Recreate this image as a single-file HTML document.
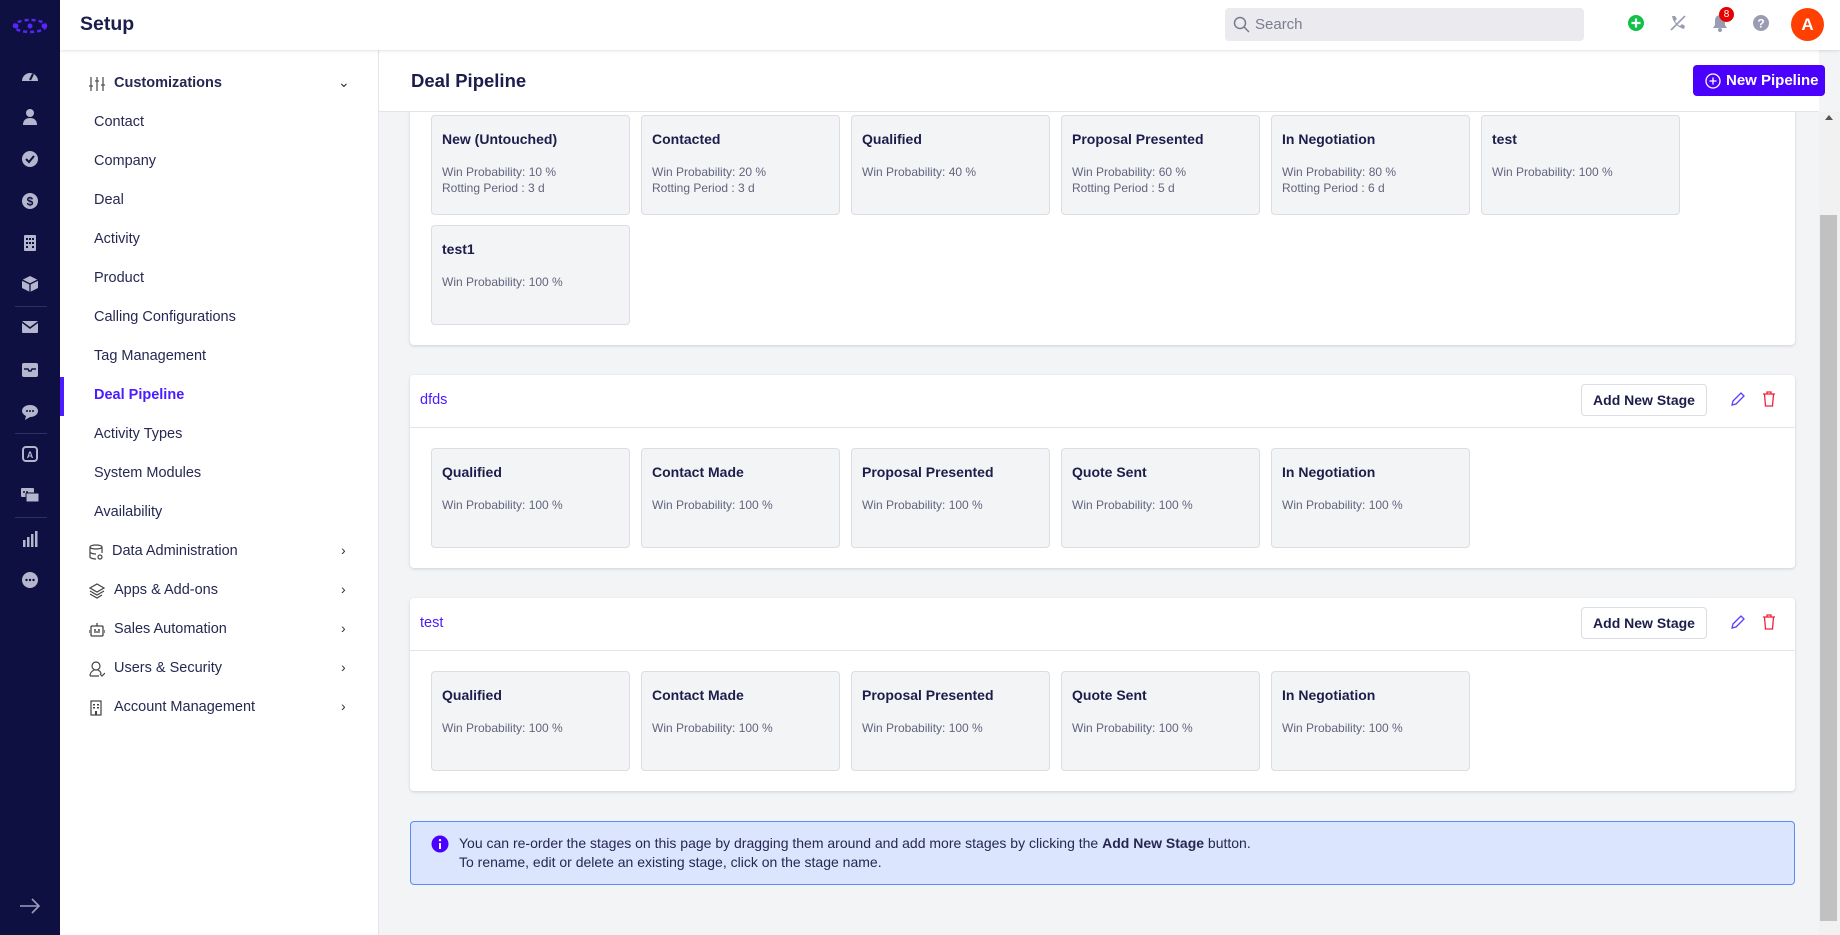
<!DOCTYPE html>
<html><head><meta charset="utf-8"><style>
*{box-sizing:border-box;margin:0;padding:0}
body{width:1840px;height:935px;overflow:hidden;background:#f3f4f6;font-family:"Liberation Sans",sans-serif;color:#1c1d4a;position:relative}
.abs{position:absolute}
#rail{left:0;top:0;width:60px;height:935px;background:#0e1042}
.ri{position:absolute;left:20px;width:20px;height:20px}
.sep{position:absolute;left:15px;width:32px;height:1px;background:#2d3065}
#top{left:60px;top:0;width:1780px;height:50px;background:#fff;box-shadow:0 1px 3px rgba(0,0,0,.12);z-index:5}
#side{left:60px;top:50px;width:319px;height:885px;background:#fff;border-right:1px solid #e3e4ea}
.si{position:absolute;left:94px;height:39px;line-height:39px;font-size:14.5px;color:#262852}
.sg{position:absolute;left:89px;height:39px;line-height:39px;font-size:14.5px;color:#262852}
.sg svg{position:absolute;left:0;top:12px}
.sg span{position:absolute;left:25px;white-space:nowrap}
.chev{position:absolute;left:341px;font-size:14px;color:#333}
#ph{left:379px;top:50px;width:1440px;height:62px;background:#fff;border-bottom:1px solid #e3e4ea;z-index:4}
.card{position:absolute;left:410px;width:1385px;background:#fff;border-radius:4px;box-shadow:0 1px 3px rgba(0,0,0,.15)}
.st{position:absolute;width:199px;height:100px;background:#f3f4f6;border:1px solid #dcdde3;border-radius:4px}
.st b{position:absolute;left:10px;top:15px;font-size:14px;color:#1c1d4a;white-space:nowrap}
.st p{position:absolute;left:10px;top:48px;font-size:12px;color:#62647e;line-height:16px;white-space:nowrap}
.btn{position:absolute;left:1171px;width:126px;height:32px;border:1px solid #dcdde3;border-radius:4px;background:#fff;font-size:14px;font-weight:bold;color:#1c1d4a;text-align:center;line-height:30px}
.cname{position:absolute;left:10px;top:17px;font-size:14.5px;color:#4b1cff}
</style></head><body>
<div id="rail" class="abs">
<svg class="abs" style="left:12px;top:18px" width="36" height="16" viewBox="0 0 36 16"><g fill="none" stroke="#5a24ff" stroke-width="2.5" stroke-dasharray="4 3"><ellipse cx="18" cy="8" rx="16" ry="6"/></g><circle cx="4" cy="8" r="2.5" fill="#5a24ff"/><circle cx="18" cy="8" r="2.5" fill="#5a24ff"/><circle cx="32" cy="8" r="2.5" fill="#5a24ff"/></svg>
<svg class="ri" style="top:66px" viewBox="0 0 20 20"><path d="M2 15a8 8 0 1 1 16 0z" fill="#b3b6cc"/><path d="M10 14l3-6" stroke="#0e1042" stroke-width="2"/></svg>
<svg class="ri" style="top:107px" viewBox="0 0 20 20"><circle cx="10" cy="6" r="4" fill="#b3b6cc"/><path d="M3 18c0-5 3-7 7-7s7 2 7 7z" fill="#b3b6cc"/></svg>
<svg class="ri" style="top:149px" viewBox="0 0 20 20"><circle cx="10" cy="10" r="8" fill="#b3b6cc"/><path d="M6 10l3 3 5-6" stroke="#0e1042" stroke-width="2" fill="none"/></svg>
<svg class="ri" style="top:191px" viewBox="0 0 20 20"><circle cx="10" cy="10" r="8" fill="#b3b6cc"/><text x="10" y="14.5" font-size="12" text-anchor="middle" fill="#0e1042" font-family="Liberation Sans" font-weight="bold">$</text></svg>
<svg class="ri" style="top:233px" viewBox="0 0 20 20"><rect x="4" y="2" width="12" height="16" rx="1" fill="#b3b6cc"/><g fill="#0e1042"><rect x="6" y="5" width="2" height="2"/><rect x="9" y="5" width="2" height="2"/><rect x="12" y="5" width="2" height="2"/><rect x="6" y="9" width="2" height="2"/><rect x="9" y="9" width="2" height="2"/><rect x="12" y="9" width="2" height="2"/><rect x="6" y="13" width="2" height="2"/><rect x="12" y="13" width="2" height="2"/></g></svg>
<svg class="ri" style="top:274px" viewBox="0 0 20 20"><path d="M10 2l8 4v8l-8 4-8-4V6z" fill="#b3b6cc"/><path d="M2 6l8 4 8-4M10 10v8" stroke="#0e1042" stroke-width="1.3" fill="none"/></svg>
<div class="sep" style="top:306px"></div>
<svg class="ri" style="top:317px" viewBox="0 0 20 20"><rect x="2" y="4" width="16" height="12" rx="1" fill="#b3b6cc"/><path d="M2 5l8 6 8-6" stroke="#0e1042" stroke-width="1.5" fill="none"/></svg>
<svg class="ri" style="top:360px" viewBox="0 0 20 20"><rect x="2" y="3" width="16" height="14" rx="2" fill="#b3b6cc"/><path d="M4 9h4l1 2h2l1-2h4" stroke="#0e1042" stroke-width="1.5" fill="none"/></svg>
<svg class="ri" style="top:402px" viewBox="0 0 20 20"><path d="M10 3c5 0 8 3 8 6s-3 6-8 6l-5 3 1-4c-2-1-4-3-4-5 0-3 3-6 8-6z" fill="#b3b6cc"/><g fill="#0e1042"><circle cx="7" cy="9" r="1"/><circle cx="10" cy="9" r="1"/><circle cx="13" cy="9" r="1"/></g></svg>
<div class="sep" style="top:433px"></div>
<svg class="ri" style="top:444px" viewBox="0 0 20 20"><rect x="3" y="3" width="14" height="14" rx="3" fill="none" stroke="#b3b6cc" stroke-width="2"/><text x="10" y="14" font-size="9" text-anchor="middle" fill="#b3b6cc" font-family="Liberation Sans" font-weight="bold">A</text></svg>
<svg class="ri" style="top:485px" viewBox="0 0 20 20"><rect x="1" y="3" width="13" height="9" rx="1" fill="#b3b6cc"/><rect x="6" y="8" width="13" height="9" rx="1" fill="#b3b6cc" stroke="#0e1042"/><g fill="#0e1042"><circle cx="4" cy="7" r="1"/><circle cx="7" cy="7" r="1"/></g></svg>
<div class="sep" style="top:517px"></div>
<svg class="ri" style="top:529px" viewBox="0 0 20 20"><g fill="#b3b6cc"><rect x="3" y="11" width="2.5" height="7"/><rect x="7" y="8" width="2.5" height="10"/><rect x="11" y="5" width="2.5" height="13"/><rect x="15" y="2" width="2.5" height="16"/></g></svg>
<svg class="ri" style="top:570px" viewBox="0 0 20 20"><circle cx="10" cy="10" r="8" fill="#b3b6cc"/><g fill="#0e1042"><circle cx="6.5" cy="10" r="1.2"/><circle cx="10" cy="10" r="1.2"/><circle cx="13.5" cy="10" r="1.2"/></g></svg>
<svg class="abs" style="left:19px;top:897px" width="22" height="18" viewBox="0 0 22 18"><path d="M1 9h19M13 2l7 7-7 7" stroke="#9a9db8" stroke-width="1.6" fill="none"/></svg>
</div>

<div id="top" class="abs">
<div class="abs" style="left:20px;top:13px;font-size:19.5px;font-weight:bold;color:#1c1d4a">Setup</div>
<div class="abs" style="left:1165px;top:8px;width:359px;height:33px;background:#ebebef;border-radius:4px">
<svg class="abs" style="left:8px;top:8px" width="17" height="17" viewBox="0 0 17 17"><circle cx="7" cy="7" r="5.5" fill="none" stroke="#777a90" stroke-width="1.5"/><path d="M11 11l5 5" stroke="#777a90" stroke-width="1.5"/></svg>
<div class="abs" style="left:30px;top:8px;font-size:15px;color:#7a7c90">Search</div></div>
<svg class="abs" style="left:1567px;top:14px" width="18" height="18" viewBox="0 0 18 18"><circle cx="9" cy="9" r="8" fill="#10c24a"/><path d="M9 4.5v9M4.5 9h9" stroke="#fff" stroke-width="2.2"/></svg>
<svg class="abs" style="left:1609px;top:14px" width="18" height="18" viewBox="0 0 18 18"><path d="M3 2c1 6 5 11 12 13l1-3-3-2-2 2c-2-1-4-3-5-5l2-2-2-3z" fill="#9a9db2"/><path d="M2 16L16 2" stroke="#9a9db2" stroke-width="1.6"/></svg>
<svg class="abs" style="left:1651px;top:14px" width="18" height="18" viewBox="0 0 18 18"><path d="M9 1a5 5 0 0 1 5 5v5l2 3H2l2-3V6a5 5 0 0 1 5-5z" fill="#9a9db2"/><circle cx="9" cy="16" r="2" fill="#9a9db2"/></svg>
<div class="abs" style="left:1659px;top:7px;width:15px;height:15px;border-radius:50%;background:#e60000;color:#fff;font-size:10px;text-align:center;line-height:15px">8</div>
<svg class="abs" style="left:1692px;top:14px" width="18" height="18" viewBox="0 0 18 18"><circle cx="9" cy="9" r="8" fill="#9a9db2"/><text x="9" y="13.5" font-size="12" text-anchor="middle" fill="#fff" font-family="Liberation Sans" font-weight="bold">?</text></svg>
<div class="abs" style="left:1731px;top:8px;width:33px;height:33px;border-radius:50%;background:#ff4000;color:#fff;font-size:17px;font-weight:bold;text-align:center;line-height:33px">A</div>
</div>

<div id="side" class="abs"></div>
<div class="sg" style="top:64px;font-weight:bold"><svg width="16" height="16" viewBox="0 0 16 16"><g stroke="#555" stroke-width="1.3"><path d="M2 1v14M8 1v14M14 1v14M0 10h4M6 5h4M12 9h4"/></g></svg><span style="left:25px">Customizations</span></div>
<div class="chev" style="top:74px;left:338px">&#8964;</div>
<div class="si" style="top:103px">Contact</div>
<div class="si" style="top:142px">Company</div>
<div class="si" style="top:181px">Deal</div>
<div class="si" style="top:220px">Activity</div>
<div class="si" style="top:259px">Product</div>
<div class="si" style="top:298px">Calling Configurations</div>
<div class="si" style="top:337px">Tag Management</div>
<div class="abs" style="left:60px;top:377px;width:4px;height:39px;background:#4b1cff"></div>
<div class="si" style="top:376px;color:#4b1cff;font-weight:bold">Deal Pipeline</div>
<div class="si" style="top:415px">Activity Types</div>
<div class="si" style="top:454px">System Modules</div>
<div class="si" style="top:493px">Availability</div>
<div class="sg" style="top:532px"><svg width="14" height="16" viewBox="0 0 14 16"><g fill="none" stroke="#444" stroke-width="1.2"><ellipse cx="7" cy="3" rx="6" ry="2"/><path d="M1 3v10c0 1 3 2 6 2M13 3v6M1 8c0 1 3 2 6 2"/><circle cx="11" cy="13" r="2"/></g></svg><span style="left:23px">Data Administration</span></div>
<div class="sg" style="top:571px"><svg width="16" height="16" viewBox="0 0 16 16"><g fill="none" stroke="#444" stroke-width="1.2"><path d="M8 1l7 4-7 4-7-4z"/><path d="M1 8l7 4 7-4M1 11l7 4 5-3"/></g></svg></div><div class="si" style="top:571px;left:114px">Apps &amp; Add-ons</div>
<div class="sg" style="top:610px"><svg width="16" height="16" viewBox="0 0 16 16"><g fill="none" stroke="#444" stroke-width="1.3"><rect x="2" y="4" width="12" height="10" rx="1"/><path d="M8 1v3M0 8v3M16 8v3M5 10h6"/></g><circle cx="6" cy="8" r="1" fill="#444"/><circle cx="10" cy="8" r="1" fill="#444"/></svg></div><div class="si" style="top:610px;left:114px">Sales Automation</div>
<div class="sg" style="top:649px"><svg width="16" height="16" viewBox="0 0 16 16"><g fill="none" stroke="#444" stroke-width="1.2"><circle cx="7" cy="5" r="4"/><path d="M1 15c0-3 2-5 4-6M9 9c2 1 3 2 3 4M1 15h9M11 13l2 2 3-3"/></g></svg></div><div class="si" style="top:649px;left:114px">Users &amp; Security</div>
<div class="sg" style="top:688px"><svg width="14" height="16" viewBox="0 0 14 16"><g fill="none" stroke="#444" stroke-width="1.2"><rect x="2" y="1" width="10" height="14"/></g><g fill="#444"><rect x="4" y="4" width="2" height="1.5"/><rect x="8" y="4" width="2" height="1.5"/><rect x="4" y="7" width="2" height="1.5"/><rect x="8" y="7" width="2" height="1.5"/><rect x="6" y="11" width="2" height="4"/></g></svg></div><div class="si" style="top:688px;left:114px">Account Management</div>
<div class="chev" style="top:542px">&#8250;</div>
<div class="chev" style="top:581px">&#8250;</div>
<div class="chev" style="top:620px">&#8250;</div>
<div class="chev" style="top:659px">&#8250;</div>
<div class="chev" style="top:698px">&#8250;</div>

<div id="ph" class="abs">
<div class="abs" style="left:32px;top:20px;font-size:18.5px;font-weight:bold;color:#1c1d4a">Deal Pipeline</div>
<div class="abs" style="left:1314px;top:15px;width:132px;height:31px;background:#4b00ff;border-radius:4px;color:#fff;font-size:15px;font-weight:bold;line-height:31px;padding-left:33px">New Pipeline
<svg class="abs" style="left:12px;top:8px" width="16" height="16" viewBox="0 0 16 16"><circle cx="8" cy="8" r="7" fill="none" stroke="#fff" stroke-width="1.3"/><path d="M8 4.5v7M4.5 8h7" stroke="#fff" stroke-width="1.3"/></svg></div>
</div>
<div class="abs" style="left:1819px;top:112px;width:21px;height:823px;background:#f1f1f1"></div>
<div class="abs" style="left:1820px;top:215px;width:17px;height:706px;background:#c1c1c1"></div>
<div class="abs" style="left:1825px;top:115px;width:0;height:0;border-left:4px solid transparent;border-right:4px solid transparent;border-bottom:5px solid #555"></div>

<div class="card" style="top:60px;height:285px">
<div class="st" style="left:21px;top:55px"><b>New (Untouched)</b><p>Win Probability: 10 %<br>Rotting Period : 3 d</p></div>
<div class="st" style="left:231px;top:55px"><b>Contacted</b><p>Win Probability: 20 %<br>Rotting Period : 3 d</p></div>
<div class="st" style="left:441px;top:55px"><b>Qualified</b><p>Win Probability: 40 %</p></div>
<div class="st" style="left:651px;top:55px"><b>Proposal Presented</b><p>Win Probability: 60 %<br>Rotting Period : 5 d</p></div>
<div class="st" style="left:861px;top:55px"><b>In Negotiation</b><p>Win Probability: 80 %<br>Rotting Period : 6 d</p></div>
<div class="st" style="left:1071px;top:55px"><b>test</b><p>Win Probability: 100 %</p></div>
<div class="st" style="left:21px;top:165px"><b>test1</b><p>Win Probability: 100 %</p></div>
</div>

<div class="card" style="top:375px;height:193px">
<div class="cname">dfds</div>
<div class="btn" style="top:9px">Add New Stage</div>
<svg class="abs" style="left:1320px;top:16px" width="16" height="16" viewBox="0 0 16 16"><path d="M2 14l1-4 8-8 3 3-8 8z" fill="none" stroke="#5a3cff" stroke-width="1.3"/></svg>
<svg class="abs" style="left:1352px;top:16px" width="14" height="16" viewBox="0 0 14 16"><path d="M1 3h12M5 3V1h4v2M2.5 3l1 12h7l1-12" fill="none" stroke="#f0203a" stroke-width="1.3"/></svg>
<div class="abs" style="left:0;top:52px;width:1385px;height:1px;background:#e3e4ea"></div>
<div class="st" style="left:21px;top:73px"><b>Qualified</b><p>Win Probability: 100 %</p></div>
<div class="st" style="left:231px;top:73px"><b>Contact Made</b><p>Win Probability: 100 %</p></div>
<div class="st" style="left:441px;top:73px"><b>Proposal Presented</b><p>Win Probability: 100 %</p></div>
<div class="st" style="left:651px;top:73px"><b>Quote Sent</b><p>Win Probability: 100 %</p></div>
<div class="st" style="left:861px;top:73px"><b>In Negotiation</b><p>Win Probability: 100 %</p></div>
</div>

<div class="card" style="top:598px;height:193px">
<div class="cname">test</div>
<div class="btn" style="top:9px">Add New Stage</div>
<svg class="abs" style="left:1320px;top:16px" width="16" height="16" viewBox="0 0 16 16"><path d="M2 14l1-4 8-8 3 3-8 8z" fill="none" stroke="#5a3cff" stroke-width="1.3"/></svg>
<svg class="abs" style="left:1352px;top:16px" width="14" height="16" viewBox="0 0 14 16"><path d="M1 3h12M5 3V1h4v2M2.5 3l1 12h7l1-12" fill="none" stroke="#f0203a" stroke-width="1.3"/></svg>
<div class="abs" style="left:0;top:52px;width:1385px;height:1px;background:#e3e4ea"></div>
<div class="st" style="left:21px;top:73px"><b>Qualified</b><p>Win Probability: 100 %</p></div>
<div class="st" style="left:231px;top:73px"><b>Contact Made</b><p>Win Probability: 100 %</p></div>
<div class="st" style="left:441px;top:73px"><b>Proposal Presented</b><p>Win Probability: 100 %</p></div>
<div class="st" style="left:651px;top:73px"><b>Quote Sent</b><p>Win Probability: 100 %</p></div>
<div class="st" style="left:861px;top:73px"><b>In Negotiation</b><p>Win Probability: 100 %</p></div>
</div>

<div class="abs" style="left:410px;top:821px;width:1385px;height:64px;background:#dbe5fd;border:1px solid #5b8cf5;border-radius:4px">
<svg class="abs" style="left:20px;top:13px" width="18" height="18" viewBox="0 0 18 18"><circle cx="9" cy="9" r="8.5" fill="#4b00ff"/><rect x="8" y="8" width="2" height="6" fill="#fff"/><circle cx="9" cy="5.2" r="1.2" fill="#fff"/></svg>
<div class="abs" style="left:48px;top:12px;font-size:14px;line-height:19px;color:#262852">You can re-order the stages on this page by dragging them around and add more stages by clicking the <b>Add New Stage</b> button.<br>To rename, edit or delete an existing stage, click on the stage name.</div>
</div>
</body></html>
